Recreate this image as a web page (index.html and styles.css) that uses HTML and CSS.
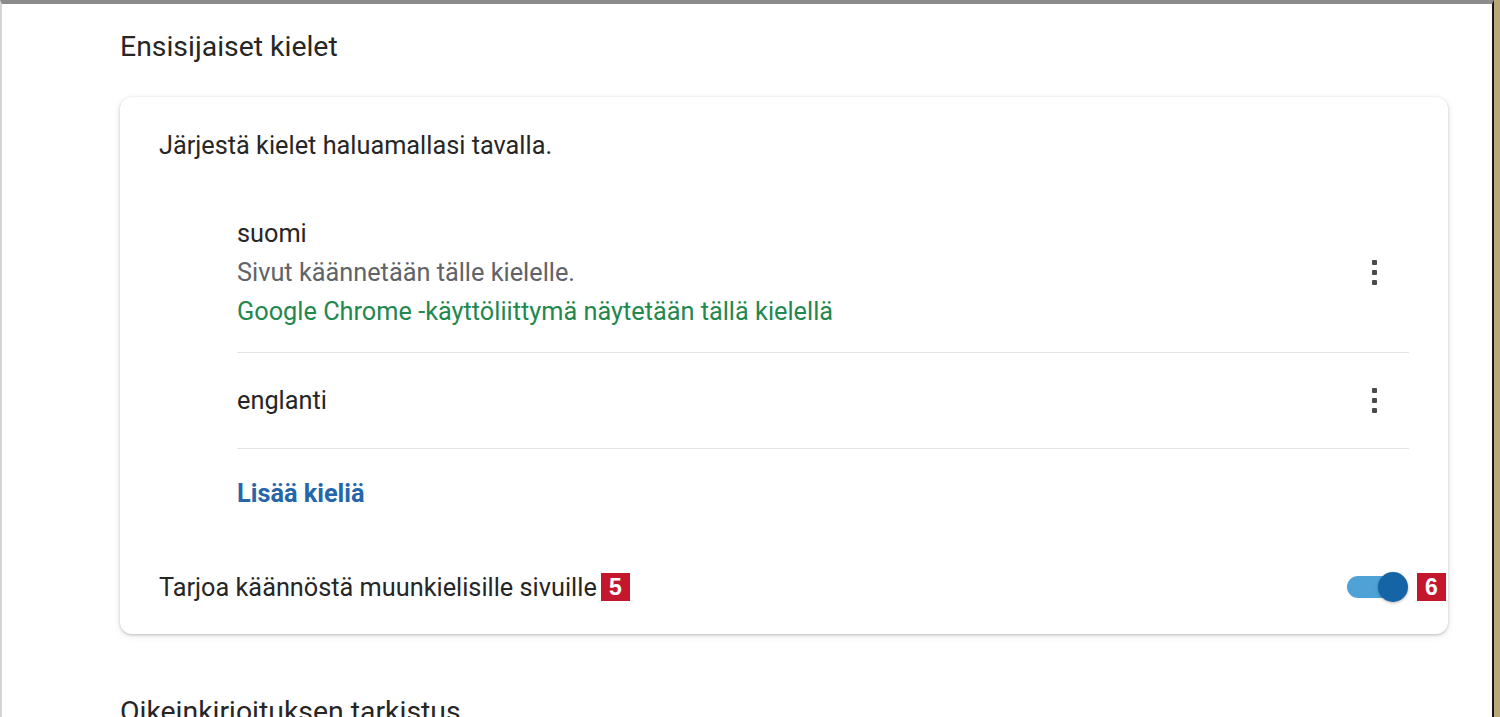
FILE: index.html
```html
<!DOCTYPE html>
<html lang="fi">
<head>
    <meta charset="UTF-8">
    <meta name="viewport" content="width=device-width, initial-scale=1.0">
    <title>Kielet - Asetukset</title>
    <link rel="stylesheet" href="styles.css">
</head>
<body>
    <div class="window">
        <h2 class="section-title">Ensisijaiset kielet</h2>

        <div class="card">
            <div class="intro">Järjestä kielet haluamallasi tavalla.</div>

            <div class="lang-list">
                <div class="lang-row">
                    <div class="lang-text">
                        <div class="lang-name">suomi</div>
                        <div class="lang-note">Sivut käännetään tälle kielelle.</div>
                        <div class="lang-ui">Google Chrome -käyttöliittymä näytetään tällä kielellä</div>
                    </div>
                    <span class="kebab"><i></i><i></i><i></i></span>
                </div>
                <div class="lang-row short">
                    <div class="lang-text">
                        <div class="lang-name">englanti</div>
                    </div>
                    <span class="kebab"><i></i><i></i><i></i></span>
                </div>
                <div class="add-row">
                    <a class="link" href="#">Lisää kieliä</a>
                </div>
            </div>

            <div class="toggle-row">
                <div class="toggle-label">Tarjoa käännöstä muunkielisille sivuille<span class="badge">5</span></div>
                <div class="toggle-wrap">
                    <span class="toggle on"><span class="knob"></span></span>
                    <span class="badge">6</span>
                </div>
            </div>
        </div>

        <h2 class="section-title next">Oikeinkirjoituksen tarkistus</h2>
    </div>
</body>
</html>
```

FILE: styles.css
```css
html, body {
    margin: 0;
    height: 100%;
    overflow: hidden;
}
body {
    font-family: Roboto, "Liberation Sans", Arial, sans-serif;
    background: #b7a77b;
    color: #262626;
}
.window {
    width: 1494px;
    height: 100%;
    box-sizing: border-box;
    background: #fff;
    border-top: 4px solid #8c8c8c;
    border-left: 2px solid #d4d4d4;
    border-right: 2px solid #151515;
    padding: 0 44px 0 118px;
}

.section-title {
    font-size: 28.4px;
    font-weight: 400;
    line-height: 30px;
    margin: 0;
    padding-top: 28px;
    color: #262626;
}
.section-title.next {
    padding-top: 63px;
}

.card {
    margin-top: 35px;
    background: #fff;
    border-radius: 12px;
    box-shadow: 0 1px 3px rgba(0,0,0,0.22), 0 2px 8px rgba(0,0,0,0.08);
    padding: 36px 39px 22px 39px;
}
.intro {
    font-size: 25.3px;
    line-height: 26px;
}

.lang-list {
    margin: 34px 0 0 78px;
}
.lang-row {
    display: flex;
    align-items: center;
    justify-content: space-between;
    padding: 21px 0;
    border-bottom: 1px solid #e3e3e3;
}
.lang-row.short {
    padding: 0;
    height: 95px;
}
.lang-text {
    font-size: 25.3px;
    line-height: 39px;
}
.lang-note { color: #606367; }
.lang-ui { color: #22884e; }

.kebab {
    display: flex;
    flex-direction: column;
    gap: 5px;
    margin-right: 32px;
}
.kebab i {
    display: block;
    width: 5px;
    height: 5px;
    border-radius: 1px;
    background: #4a4a4a;
}

.add-row {
    padding: 32px 0;
    line-height: 26px;
}
.link {
    font-size: 25.3px;
    font-weight: 700;
    color: #2566ab;
    text-decoration: none;
}

.toggle-row {
    display: flex;
    align-items: center;
    justify-content: space-between;
    height: 50px;
    margin-top: 20px;
}
.toggle-label {
    font-size: 25.3px;
    display: flex;
    align-items: center;
}
.toggle-wrap {
    display: flex;
    align-items: center;
    margin-right: -37px;
}

.toggle {
    position: relative;
    display: block;
    width: 48px;
    height: 22px;
    border-radius: 11px;
    background: #4ea2d6;
}
.toggle .knob {
    position: absolute;
    top: -4px;
    right: -13px;
    width: 30px;
    height: 30px;
    border-radius: 50%;
    background: #1565a6;
    box-shadow: 0 1px 3px rgba(0,0,0,0.3);
}

.badge {
    display: inline-block;
    width: 29px;
    height: 28px;
    line-height: 28px;
    text-align: center;
    background: #c3172e;
    color: #fff;
    font-family: "Liberation Sans", Arial, sans-serif;
    font-weight: 700;
    font-size: 23px;
}
.toggle-label .badge {
    margin-left: 4px;
}
.toggle-wrap .badge {
    margin-left: 22px;
}
```
